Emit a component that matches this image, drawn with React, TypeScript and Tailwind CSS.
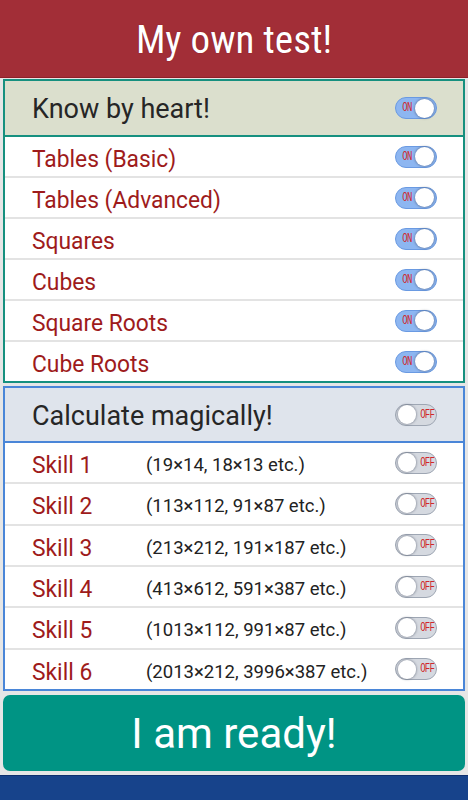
import { useState } from 'react'

const basics = ['Tables (Basic)', 'Tables (Advanced)', 'Squares', 'Cubes', 'Square Roots', 'Cube Roots']

const skills = [
  { name: 'Skill 1', hint: '(19×14, 18×13 etc.)' },
  { name: 'Skill 2', hint: '(113×112, 91×87 etc.)' },
  { name: 'Skill 3', hint: '(213×212, 191×187 etc.)' },
  { name: 'Skill 4', hint: '(413×612, 591×387 etc.)' },
  { name: 'Skill 5', hint: '(1013×112, 991×87 etc.)' },
  { name: 'Skill 6', hint: '(2013×212, 3996×387 etc.)' },
]

const font = { fontFamily: 'Roboto, "Noto Sans", sans-serif' }

function Toggle({ on, onClick }: { on: boolean; onClick: () => void }) {
  return (
    <button
      onClick={onClick}
      className={`flex h-[22px] w-[42px] shrink-0 items-center rounded-full border px-px ${
        on ? 'justify-end border-[#6a9ae2] bg-[#8db6f1]' : 'justify-start border-[#9ea6b3] bg-[#d5d9e0]'
      }`}
    >
      {on && (
        <span className="inline-block w-[14px] scale-x-75 font-['Liberation_Mono',monospace] text-[12px] leading-none tracking-[-1px] text-[#d0282b]">
          ON
        </span>
      )}
      <span className="ml-[1px] mr-[1px] h-[19px] w-[19px] rounded-full bg-white shadow-[0_0_2px_1px_rgba(60,70,90,0.35)]" />
      {!on && (
        <span className="ml-[1px] inline-block w-[17px] scale-x-75 font-['Liberation_Mono',monospace] text-[12px] leading-none tracking-[-1px] text-[#d0282b]">
          OFF
        </span>
      )}
    </button>
  )
}

export default function App() {
  const [basicOn, setBasicOn] = useState(basics.map(() => true))
  const [allBasic, setAllBasic] = useState(true)
  const [skillOn, setSkillOn] = useState(skills.map(() => false))
  const [allSkills, setAllSkills] = useState(false)

  return (
    <div className="flex h-[800px] w-[468px] flex-col bg-[#e6e6e6]" style={font}>
      {/* title bar */}
      <div className="flex h-[78px] shrink-0 items-center justify-center border-b border-[#8e1f28] bg-[#a22e37] pt-[4px]">
        <h1 className="font-['Roboto_Condensed',Roboto,sans-serif] text-[39px] text-white [text-shadow:0_0_1px_#7a0f18]">
          My own test!
        </h1>
      </div>

      <div className="flex flex-1 flex-col px-[3px]">
        {/* know by heart */}
        <div className="mt-px flex h-[304px] shrink-0 flex-col border-2 border-[#16907f] bg-white">
          <div className="flex h-[56px] shrink-0 items-center justify-between border-b-2 border-[#16907f] bg-[#dbdfcd] pl-[27px] pr-[26px]">
            <span className="pt-[2px] text-[27px] leading-[32px] text-[#262626]">Know by heart!</span>
            <Toggle on={allBasic} onClick={() => setAllBasic(!allBasic)} />
          </div>
          {basics.map((item, i) => (
            <div
              key={item}
              className={`flex min-h-0 flex-1 items-center justify-between pl-[27px] pr-[26px] ${
                i < basics.length - 1 ? 'border-b-2 border-[#e3e3e3]' : ''
              }`}
            >
              <span className="inline-block origin-left scale-x-95 pt-[5px] text-[24px] leading-[28px] text-[#9e1b1b]">
                {item}
              </span>
              <Toggle
                on={basicOn[i]}
                onClick={() => setBasicOn(basicOn.map((v, j) => (j === i ? !v : v)))}
              />
            </div>
          ))}
        </div>

        {/* calculate magically */}
        <div className="mt-[3px] flex h-[305px] shrink-0 flex-col border-2 border-[#4a86d8] bg-white">
          <div className="flex h-[55px] shrink-0 items-center justify-between border-b-2 border-[#4a86d8] bg-[#dfe4ec] pl-[27px] pr-[26px]">
            <span className="pt-[2px] text-[27px] leading-[32px] text-[#262626]">Calculate magically!</span>
            <Toggle on={allSkills} onClick={() => setAllSkills(!allSkills)} />
          </div>
          {skills.map((s, i) => (
            <div
              key={s.name}
              className={`flex min-h-0 flex-1 items-center pl-[27px] pr-[26px] ${
                i < skills.length - 1 ? 'border-b-2 border-[#e3e3e3]' : ''
              }`}
            >
              <span className="inline-block w-[114px] origin-left scale-x-95 pt-[5px] text-[24px] leading-[28px] text-[#9e1b1b]">
                {s.name}
              </span>
              <span className="flex-1 pt-[5px] text-[18.5px] leading-[24px] text-[#222]">{s.hint}</span>
              <Toggle
                on={skillOn[i]}
                onClick={() => setSkillOn(skillOn.map((v, j) => (j === i ? !v : v)))}
              />
            </div>
          ))}
        </div>

        <button className="mt-[4px] flex h-[76px] shrink-0 items-center justify-center rounded-[7px] bg-[#009484] text-[42px] text-white">
          I am ready!
        </button>
      </div>

      {/* nav strip */}
      <div className="mt-[4px] h-[25px] shrink-0 border-t border-[#0d2f6e] bg-[#17438b]" />
    </div>
  )
}
